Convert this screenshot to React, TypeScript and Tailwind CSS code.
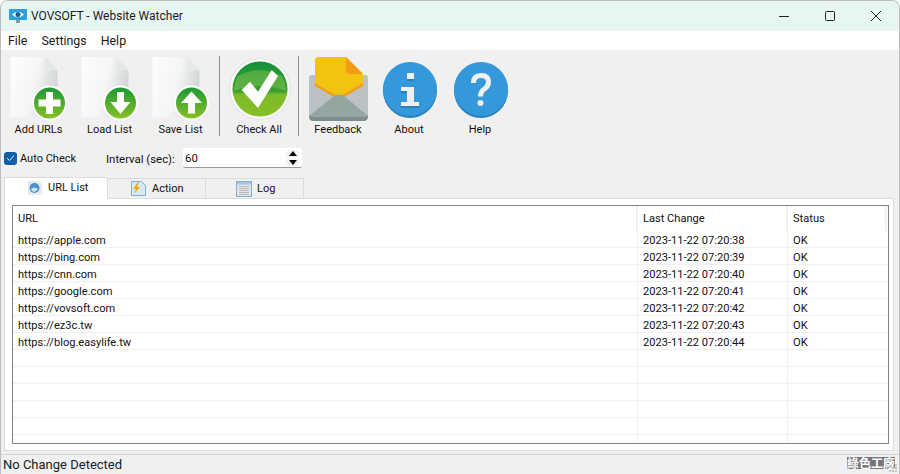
import type { ReactNode } from 'react';

const urls = [
  ['https://apple.com', '2023-11-22 07:20:38', 'OK'],
  ['https://bing.com', '2023-11-22 07:20:39', 'OK'],
  ['https://cnn.com', '2023-11-22 07:20:40', 'OK'],
  ['https://google.com', '2023-11-22 07:20:41', 'OK'],
  ['https://vovsoft.com', '2023-11-22 07:20:42', 'OK'],
  ['https://ez3c.tw', '2023-11-22 07:20:43', 'OK'],
  ['https://blog.easylife.tw', '2023-11-22 07:20:44', 'OK'],
  ['', '', ''],
  ['', '', ''],
  ['', '', ''],
  ['', '', ''],
  ['', '', ''],
  ['', '', ''],
];

const PageIcon = ({ id, kind }: { id: string; kind: 'plus' | 'down' | 'up' }) => (
  <svg width="60" height="64" viewBox="-1.500 0 60 64">
    <defs>
      <linearGradient id={`page-${id}`} x1="0" y1="0" x2="1" y2="0.3">
        <stop offset="0" stopColor="#fdfdfd" />
        <stop offset="0.6" stopColor="#f4f5f5" />
        <stop offset="1" stopColor="#d4d7d7" />
      </linearGradient>
      <linearGradient id={`ball-${id}`} x1="0" y1="0" x2="0" y2="1">
        <stop offset="0" stopColor="#1c9a34" />
        <stop offset="1" stopColor="#86bf24" />
      </linearGradient>
    </defs>
    <path d="M0 0h35l12 13v47H0z" fill={`url(#page-${id})`} />
    <path d="M35 0l12 13H38q-3 0-3-3z" fill="#e6e8e8" />
    <circle cx="39" cy="46" r="17.500" fill="#fff" />
    <circle cx="39" cy="46" r="15.500" fill={`url(#ball-${id})`} />
    {kind === 'plus' && <path d="M35.500 35h7v7.500h7.500v7h-7.500v7.500h-7v-7.500H28v-7h7.500z" fill="#fff" />}
    {kind === 'down' && <path d="M35.500 35h7v10h6.500L39 57 29 45h6.500z" fill="#fff" />}
    {kind === 'up' && <path d="M39 34.500l10.500 11.500h-7v10.500h-7V46h-7z" fill="#fff" />}
  </svg>
);

const CheckIcon = () => (
  <svg width="64" height="63" viewBox="-2 0 64 63">
    <defs>
      <linearGradient id="check-ball" x1="0" y1="0" x2="0" y2="1">
        <stop offset="0" stopColor="#12923a" />
        <stop offset="0.55" stopColor="#3f9f30" />
        <stop offset="0.6" stopColor="#7cba28" />
        <stop offset="1" stopColor="#86c025" />
      </linearGradient>
    </defs>
    <circle cx="31" cy="31" r="30.500" fill="#f7f8f7" stroke="#dfe2df" />
    <circle cx="31" cy="31" r="27.500" fill="url(#check-ball)" />
    <path d="M5 33q26-10 52 0 0-8-4-15Q31 6 9 18q-4 7-4 15z" fill="#a5d45e" opacity="0.35" />
    <path d="M12.700 32l8.300-8.300 8 10L42.700 12l6.300 6-20 32z" fill="#fff" />
  </svg>
);

const FeedbackIcon = () => (
  <svg width="60" height="64" viewBox="-1 0 60 64">
    <path d="M0 21q0-3 3-3h53q3 0 3 3v38q0 5-5 5H5q-5 0-5-5z" fill="#bcc1c6" />
    <path d="M6 4q0-4 4-4h27l17 17v9L30 40 6 26z" fill="#f2c40f" />
    <path d="M6 26l24 14 24-14v3L30 43 6 29z" fill="#f29f0e" />
    <path d="M37 0l17 17H41q-4 0-4-4z" fill="#f39c12" />
    <path d="M0 59l25-20q5-3 10 0l24 20q0 5-5 5H5q-5 0-5-5z" fill="#95a5a2" />
    <path d="M0 58v1q0 5 5 5h49q5 0 5-5v-1q-1 2-3 2H3q-2 0-3-2z" fill="#7f8c8d" />
  </svg>
);

const InfoIcon = () => (
  <svg className="mb-[3px]" width="56" height="56" viewBox="-2 0 56 56">
    <circle cx="27" cy="29" r="27" fill="#2980b9" />
    <circle cx="27" cy="27" r="27" fill="#3498db" />
    <path d="M24 13h7v6h-7zM18 27h13v15h5v4H18v-4h6V31h-6z" fill="#2980b9" />
    <path d="M24 11h7v6h-7zM18 25h13v15h5v4H18v-4h6V29h-6z" fill="#ecf0f1" />
  </svg>
);

const HelpIcon = () => (
  <svg className="mb-[3px]" width="56" height="56" viewBox="-2 0 56 56">
    <circle cx="27" cy="29" r="27" fill="#2980b9" />
    <circle cx="27" cy="27" r="27" fill="#3498db" />
    <path d="M19.500 21q0-7.500 7.500-7.500t7.500 6.500q0 4-3.500 6.500-4.500 3-4.500 8" fill="none" stroke="#ecf0f1" strokeWidth="5" />
    <circle cx="26.500" cy="41" r="3" fill="#ecf0f1" />
  </svg>
);

const ToolButton = ({ label, width, children }: { label: string; width: string; children: ReactNode }) => (
  <div className={`flex flex-col items-center ${width}`}>
    <div className="h-[65px] flex items-end justify-center">{children}</div>
    <span className="mt-px text-[11px] leading-[16px] text-[#111]">{label}</span>
  </div>
);

const TabGlobe = () => (
  <svg width="16" height="16" viewBox="0 0 16 16">
    <path d="M1 1h11l3 3v11H1z" fill="#e8eaec" />
    <circle cx="7.500" cy="8" r="5" fill="#4b93cf" />
    <path d="M4 9q3-3 7 0-2 3-4 3-2 0-3-3z" fill="#c9e3f5" />
  </svg>
);

const TabBolt = () => (
  <svg width="15" height="15" viewBox="0 0 15 15">
    <path d="M.500.500h10l4 4v10H.500z" fill="#d5e9f7" stroke="#7fb0d4" />
    <path d="M7 1L2 8h3l-2 5 6-7H6l2-5z" fill="#f0a818" />
  </svg>
);

const TabLog = () => (
  <svg width="16" height="16" viewBox="0 0 16 16">
    <rect x="0.500" y="0.500" width="15" height="15" fill="#e3e5e7" stroke="#7fb0d4" />
    <rect x="1" y="1" width="14" height="2.500" fill="#9cc7e8" />
    <path d="M3 5.500h10M3 7.500h10M3 9.500h10M3 11.500h10M3 13.500h10" stroke="#b5b8ba" />
  </svg>
);

export default function App() {
  return (
    <div className="w-[900px] h-[474px] overflow-hidden bg-white font-['Roboto',sans-serif] relative">
      <div className="w-full h-full flex flex-col border border-[#bdbdbd] border-b-0 rounded-t-[8px] overflow-hidden bg-[#f0f0f0]">
        {/* title bar */}
        <div className="h-[30px] shrink-0 bg-[#e6f6f2] flex items-center text-[#1a1a1a]">
          <svg className="ml-[8px]" width="18" height="16" viewBox="0 0 18 16">
            <rect x="0" y="1" width="18" height="11" rx="1" fill="#2aa0e0" />
            <path d="M3 6.500Q9 1 15 6.500 9 12 3 6.500z" fill="#fff" />
            <circle cx="9" cy="6.500" r="2.500" fill="#1a5f8c" />
            <rect x="7" y="12" width="4" height="3" fill="#8a9aa5" />
          </svg>
          <span className="ml-[4px] text-[12px]">VOVSOFT - Website Watcher</span>
          <div className="ml-auto flex items-center">
            <div className="w-[46px] h-[30px] flex items-center justify-center">
              <div className="w-[10px] h-px bg-[#222]" />
            </div>
            <div className="w-[46px] h-[30px] flex items-center justify-center">
              <div className="w-[10px] h-[10px] rounded-[1.5px] border border-[#222]" />
            </div>
            <div className="w-[46px] h-[30px] flex items-center justify-center">
              <svg width="10" height="10" viewBox="0 0 10 10">
                <path d="M0 0l10 10M10 0L0 10" stroke="#222" strokeWidth="1" />
              </svg>
            </div>
          </div>
        </div>

        {/* menu */}
        <div className="h-[19px] shrink-0 bg-white flex items-center pl-[7px] pt-[2px] gap-[14px] text-[12.400px] text-[#1a1a1a]">
          <span>File</span>
          <span>Settings</span>
          <span>Help</span>
        </div>

        {/* toolbar */}
        <div className="h-[96px] shrink-0 flex items-start pt-[6px] pl-[2px]">
          <ToolButton label="Add URLs" width="w-[71px]"><PageIcon id="a" kind="plus" /></ToolButton>
          <ToolButton label="Load List" width="w-[71px]"><PageIcon id="b" kind="down" /></ToolButton>
          <ToolButton label="Save List" width="w-[71px]"><PageIcon id="c" kind="up" /></ToolButton>
          <div className="w-px h-[80px] bg-[#8c8c8c] ml-[3px]" />
          <ToolButton label="Check All" width="w-[78px]"><CheckIcon /></ToolButton>
          <div className="w-px h-[80px] bg-[#8c8c8c]" />
          <ToolButton label="Feedback" width="w-[78px]"><FeedbackIcon /></ToolButton>
          <ToolButton label="About" width="w-[64px]"><InfoIcon /></ToolButton>
          <ToolButton label="Help" width="w-[78px]"><HelpIcon /></ToolButton>
        </div>

        {/* options */}
        <div className="h-[24px] shrink-0 flex items-center pl-[3px] text-[11.400px] leading-[18px] text-[#111]">
          <div className="w-[13px] h-[13px] rounded-[3px] bg-[#0f5fa8] flex items-center justify-center">
            <svg width="9" height="8" viewBox="0 0 9 8">
              <path d="M1 4l2.500 2.500L8 1.500" fill="none" stroke="#dfe9f3" strokeWidth="1" />
            </svg>
          </div>
          <span className="ml-[3px] w-[86px] pt-px text-[11px]">Auto Check</span>
          <span className="w-[77px] pt-px">Interval (sec):</span>
          <div className="w-[119px] h-[20px] bg-white border-b border-[#9a9a9a] rounded-[2px] flex items-center pl-[2px]">
            <span>60</span>
            <div className="ml-auto mr-[3px] flex flex-col gap-[2px]">
              <div className="w-[13px] h-[7px] rounded-t-[3px] bg-[#f4f4f4] flex items-center justify-center">
                <div className="w-0 h-0 border-x-[4px] border-x-transparent border-b-[5px] border-b-black" />
              </div>
              <div className="w-[13px] h-[7px] rounded-b-[3px] bg-[#f4f4f4] flex items-center justify-center">
                <div className="w-0 h-0 border-x-[4px] border-x-transparent border-t-[5px] border-t-black" />
              </div>
            </div>
          </div>
        </div>

        {/* tabs */}
        <div className="h-[7px] shrink-0" />
        <div className="h-[21px] shrink-0 flex items-end pl-[3px] text-[11px] text-[#111]">
          <div className="w-[104px] h-[22px] bg-white border border-b-0 border-[#dcdcdc] flex items-center pl-[22px] gap-[4px] pb-[2px] relative top-px z-10">
            <TabGlobe />
            <span className="ml-[1px] pt-[2px]">URL List</span>
          </div>
          <div className="w-[98px] h-[20px] bg-[#f0f0f0] border-t border-r border-[#dcdcdc] flex items-center pl-[23px] gap-[6px]">
            <TabBolt />
            <span className="pt-[2px]">Action</span>
          </div>
          <div className="w-[98px] h-[20px] bg-[#f0f0f0] border-t border-r border-[#dcdcdc] flex items-center pl-[30px] gap-[5px]">
            <TabLog />
            <span className="pt-[2px]">Log</span>
          </div>
        </div>

        {/* tab page */}
        <div className="ml-[3px] mr-[5px] h-[253px] shrink-0 bg-white border border-[#dcdcdc] pt-[6px] pl-[7px] pr-[4px]">
          <div className="h-[239px] border border-[#82828a] overflow-hidden text-[11.100px] text-[#111]">
            <div className="grid grid-cols-[625px_150px_99px] h-[25px]">
              <div className="border-r-2 border-[#f0f0f0] pl-[5px] leading-[25px]">URL</div>
              <div className="border-r-2 border-[#f0f0f0] pl-[5px] leading-[25px]">Last Change</div>
              <div className="pl-[5px] leading-[25px] border-r-2 border-[#f0f0f0]">Status</div>
            </div>
            {urls.map((row, i) => (
              <div key={i} className="grid grid-cols-[625px_150px_99px] h-[17px] border-b border-[#f0f0f0] overflow-hidden">
                <div className="border-r border-[#f0f0f0] pl-[5px] leading-[19px]">{row[0]}</div>
                <div className="border-r border-[#f0f0f0] pl-[5px] leading-[19px]">{row[1]}</div>
                <div className="pl-[5px] leading-[19px]">{row[2]}</div>
              </div>
            ))}
          </div>
        </div>

        {/* status bar */}
        <div className="mt-[3px] flex-1 border-t border-[#d4d4d4] pl-[2px] text-[13px] leading-[19px] text-[#1a1a1a]">
          No Change Detected
        </div>
      </div>

      <span className="absolute right-[5px] bottom-[5px] text-[12px] leading-[12px] font-bold text-white bg-[#77777b] font-['Noto_Sans_CJK_TC',sans-serif]">
        綠色工廠
      </span>
      <svg className="absolute right-[2px] bottom-[1px]" width="10" height="10" viewBox="0 0 10 10">
        <path d="M7 1h2v2H7zM4 4h2v2H4zM7 4h2v2H7zM1 7h2v2H1zM4 7h2v2H4zM7 7h2v2H7z" fill="#c4c4c4" />
      </svg>
    </div>
  );
}
